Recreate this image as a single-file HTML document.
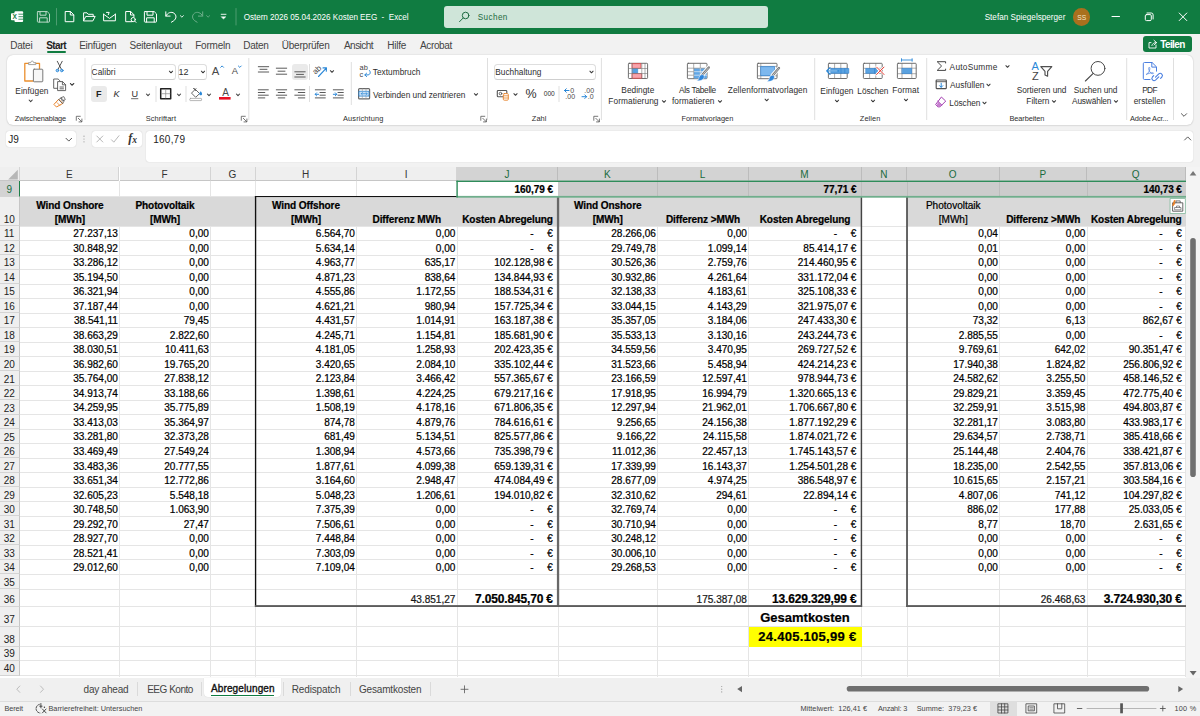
<!DOCTYPE html>
<html lang="de"><head><meta charset="utf-8"><title>Ostern 2026 05.04.2026 Kosten EEG - Excel</title>
<style>
*{box-sizing:border-box;margin:0;padding:0}
html,body{width:1200px;height:716px;overflow:hidden;background:#f2f2f2;font-family:"Liberation Sans",sans-serif;color:#222}
#app{position:relative;width:1200px;height:716px;overflow:hidden;background:#f2f2f2}
.abs{position:absolute}
.lb{position:absolute;white-space:nowrap;line-height:1;font-family:"Liberation Sans",sans-serif}
/* title bar */
#title{position:absolute;left:0;top:0;width:1200px;height:33.7px;background:#107c41}
#search{position:absolute;left:443.7px;top:5.7px;width:324px;height:22.3px;border-radius:3px;background:#cfe5d9}
#avatar{position:absolute;left:1073.2px;top:8.4px;width:17.2px;height:17.2px;border-radius:50%;background:#a9701d}
#share{position:absolute;left:1143px;top:36.2px;width:48.6px;height:16.3px;border-radius:3px;background:#107c41}
#startul{position:absolute;left:47px;top:51px;width:19px;height:1.6px;background:#107c41;border-radius:1px}
/* ribbon */
#ribbon{position:absolute;left:6.5px;top:55px;width:1186.8px;height:70px;background:#fff;border-radius:6px;box-shadow:0 0 1.5px rgba(0,0,0,.22),0 1px 2px rgba(0,0,0,.06)}
.gsep{position:absolute;top:58px;height:62px;width:1px;background:#e3e3e3}
.ssep{position:absolute;width:1px;background:#e3e3e3}
.box{position:absolute;background:#fff;border:1px solid #dedede;border-bottom-color:#cfcfcf;border-radius:3.5px}
.btnsel{position:absolute;background:#eaeaea;border-radius:3px}
/* formula bar */
.fbox{position:absolute;background:#fff;border-radius:3px;box-shadow:0 0 1px rgba(0,0,0,.25)}
/* grid */
#grid{position:absolute;left:0;top:0;width:1200px;height:716px;font-size:10.05px}
#gridbg{position:absolute;left:0;top:167px;width:1185.5px;height:510.5px;background:#fff}
.ch{position:absolute;top:167px;height:14.2px;background:#efefef;border-right:1px solid #d4d4d4;border-bottom:1px solid #c6c6c6;text-align:center;font-size:10px;line-height:15.2px;color:#333}
.ch.sel{background:#d3d3d3;color:#1a6b3e;border-bottom:1px solid #d3d3d3;border-right:1px solid #bcbcbc}
.rh{position:absolute;left:0;width:20.4px;background:#efefef;border-bottom:1px solid #d4d4d4;border-right:1px solid #c6c6c6;text-align:center;font-size:10px;color:#222}
.rh span{position:absolute;left:0;right:1px;bottom:-0.8px;line-height:13px}
.rh.sel{background:#d3d3d3;color:#1a6b3e;border-right:1.5px solid #1e8048}
.vl{position:absolute;top:181.2px;width:1px;height:496.3px;background:#e5e5e5}
.hl{position:absolute;left:20.4px;width:1165.1px;height:1px;background:#e5e5e5}
.vl2{position:absolute;width:1px;background:#bdbdbd}
.fill{position:absolute}
.c{position:absolute;white-space:nowrap;overflow:visible;color:#000;display:flex;align-items:flex-end;line-height:13.2px;padding-bottom:0.1px}
.c{-webkit-text-stroke:0.22px #000}
.c.n{justify-content:flex-end;padding-right:1.6px}
.c.a{justify-content:flex-end;padding-right:5.1px}
.c.a.q{padding-right:3.7px}
.c.h{justify-content:center;text-align:center;line-height:14px;padding-bottom:0px;margin-top:1.2px}
.c.b{font-weight:bold;letter-spacing:-0.1px}
.dash{display:inline-block;margin-right:13.6px}
.c.tot{font-size:13px;line-height:18px;margin-top:0;letter-spacing:0}
.c.tot2{font-size:13px;line-height:18px;padding-bottom:0.2px;letter-spacing:.28px}
.c.big36{font-size:12px;line-height:14.5px;letter-spacing:-.15px}
.c.s36{font-size:10.05px;color:#2a2a2a}
.bk{position:absolute;background:#3a3a3a}
.selbox{position:absolute;border:1.5px solid #3f9467}
/* bottom */
#sheetbar{position:absolute;left:0;top:677.5px;width:1200px;height:23px;background:#f0f0f0}
#acttab{position:absolute;left:204px;top:677.5px;width:77px;height:19.5px;background:#fff;border-radius:0 0 4px 4px;box-shadow:0 0 1px rgba(0,0,0,.2)}
#actul{position:absolute;left:211px;top:694.6px;width:63px;height:1.4px;background:#107c41}
.tsep{position:absolute;top:682px;height:14px;width:1px;background:#dadada}
#status{position:absolute;left:0;top:700.5px;width:1200px;height:15.5px;background:#f2f2f2;border-top:1px solid #dddddd}
#vscroll{position:absolute;left:1185.5px;top:167px;width:14.5px;height:510.5px;background:#f4f4f4}
</style></head><body><div id="app">
<div id="title"><div id="search"></div><div id="avatar"></div></div>
<div id="share"></div><div id="startul"></div>
<div id="ribbon"></div>
<!-- ribbon group separators -->







<svg class="abs" style="left:0;top:0" width="1200" height="130" viewBox="0 0 1200 130"><rect x="84.5" y="58" width="1" height="62" fill="#dfdfdf"/><rect x="248.3" y="58" width="1" height="62" fill="#dfdfdf"/><rect x="487.0" y="58" width="1" height="62" fill="#dfdfdf"/><rect x="600.9" y="58" width="1" height="62" fill="#dfdfdf"/><rect x="814.2" y="58" width="1" height="62" fill="#dfdfdf"/><rect x="926.2" y="58" width="1" height="62" fill="#dfdfdf"/><rect x="1126.2" y="58" width="1" height="62" fill="#dfdfdf"/><rect x="1173.0" y="58" width="1" height="62" fill="#dfdfdf"/><rect x="350.8" y="62" width="1" height="43" fill="#dfdfdf"/><rect x="155.5" y="86" width="1" height="16" fill="#dfdfdf"/><rect x="185.5" y="86" width="1" height="16" fill="#dfdfdf"/><rect x="309.0" y="64" width="1" height="16" fill="#dfdfdf"/><rect x="309.0" y="86" width="1" height="16" fill="#dfdfdf"/><rect x="558.5" y="86" width="1" height="16" fill="#dfdfdf"/></svg>
<div class="box" style="left:90.6px;top:63.6px;width:85px;height:16.5px"></div>
<div class="box" style="left:177.5px;top:63.6px;width:29px;height:16.5px"></div>
<div class="box" style="left:494px;top:63.6px;width:101.6px;height:16.5px"></div>
<div class="btnsel" style="left:90.5px;top:85.8px;width:16.5px;height:16.2px"></div>
<div class="btnsel" style="left:292px;top:63.5px;width:16px;height:16.5px"></div>
<!-- formula bar -->
<div class="fbox" style="left:6px;top:131px;width:70px;height:16px"></div>
<div class="fbox" style="left:92px;top:131px;width:49.5px;height:16px"></div>
<div class="fbox" style="left:146px;top:131px;width:1047px;height:31px"></div>
<div id="gridbg"></div><div class="abs" style="left:0;top:167px;width:20.4px;height:14.2px;background:#efefef;border-right:1px solid #d4d4d4;border-bottom:1px solid #c6c6c6"></div>
<div id="grid">
<div class="ch" style="left:20.4px;width:99.1px">E</div>
<div class="ch" style="left:119.5px;width:91px">F</div>
<div class="ch" style="left:210.5px;width:45px">G</div>
<div class="ch" style="left:255.5px;width:101px">H</div>
<div class="ch" style="left:356.5px;width:100.5px">I</div>
<div class="ch sel" style="left:457px;width:101px">J</div>
<div class="ch sel" style="left:558px;width:99.5px">K</div>
<div class="ch sel" style="left:657.5px;width:91px">L</div>
<div class="ch sel" style="left:748.5px;width:113px">M</div>
<div class="ch sel" style="left:861.5px;width:45.5px">N</div>
<div class="ch sel" style="left:907px;width:92.5px">O</div>
<div class="ch sel" style="left:999.5px;width:87.5px">P</div>
<div class="ch sel" style="left:1087px;width:98.5px">Q</div>
<div class="rh sel" style="top:181.2px;height:15.4px"><span>9</span></div>
<div class="rh" style="top:196.6px;height:29.4px"><span>10</span></div>
<div class="rh" style="top:226px;height:14.52px"><span>11</span></div>
<div class="rh" style="top:240.52px;height:14.52px"><span>12</span></div>
<div class="rh" style="top:255.04px;height:14.52px"><span>13</span></div>
<div class="rh" style="top:269.56px;height:14.52px"><span>14</span></div>
<div class="rh" style="top:284.08px;height:14.52px"><span>15</span></div>
<div class="rh" style="top:298.6px;height:14.52px"><span>16</span></div>
<div class="rh" style="top:313.12px;height:14.52px"><span>17</span></div>
<div class="rh" style="top:327.64px;height:14.52px"><span>18</span></div>
<div class="rh" style="top:342.16px;height:14.52px"><span>19</span></div>
<div class="rh" style="top:356.68px;height:14.52px"><span>20</span></div>
<div class="rh" style="top:371.2px;height:14.52px"><span>21</span></div>
<div class="rh" style="top:385.72px;height:14.52px"><span>22</span></div>
<div class="rh" style="top:400.24px;height:14.52px"><span>23</span></div>
<div class="rh" style="top:414.76px;height:14.52px"><span>24</span></div>
<div class="rh" style="top:429.28px;height:14.52px"><span>25</span></div>
<div class="rh" style="top:443.8px;height:14.52px"><span>26</span></div>
<div class="rh" style="top:458.32px;height:14.52px"><span>27</span></div>
<div class="rh" style="top:472.84px;height:14.52px"><span>28</span></div>
<div class="rh" style="top:487.36px;height:14.52px"><span>29</span></div>
<div class="rh" style="top:501.88px;height:14.52px"><span>30</span></div>
<div class="rh" style="top:516.4px;height:14.52px"><span>31</span></div>
<div class="rh" style="top:530.92px;height:14.52px"><span>32</span></div>
<div class="rh" style="top:545.44px;height:14.52px"><span>33</span></div>
<div class="rh" style="top:559.96px;height:14.52px"><span>34</span></div>
<div class="rh" style="top:574.48px;height:14.6px"><span>35</span></div>
<div class="rh" style="top:589.08px;height:17.5px"><span>36</span></div>
<div class="rh" style="top:606.58px;height:20px"><span>37</span></div>
<div class="rh" style="top:626.58px;height:20px"><span>38</span></div>
<div class="rh" style="top:646.58px;height:14px"><span>39</span></div>
<div class="rh" style="top:660.58px;height:15px"><span>40</span></div>
<div class="vl" style="left:119px"></div>
<div class="vl" style="left:210px"></div>
<div class="vl" style="left:255px"></div>
<div class="vl" style="left:356px"></div>
<div class="vl" style="left:456.5px"></div>
<div class="vl" style="left:557.5px"></div>
<div class="vl" style="left:657px"></div>
<div class="vl" style="left:748px"></div>
<div class="vl" style="left:861px"></div>
<div class="vl" style="left:906.5px"></div>
<div class="vl" style="left:999px"></div>
<div class="vl" style="left:1086.5px"></div>
<div class="vl" style="left:1185px"></div>
<div class="hl" style="top:196.1px"></div>
<div class="hl" style="top:225.5px"></div>
<div class="hl" style="top:240.02px"></div>
<div class="hl" style="top:254.54px"></div>
<div class="hl" style="top:269.06px"></div>
<div class="hl" style="top:283.58px"></div>
<div class="hl" style="top:298.1px"></div>
<div class="hl" style="top:312.62px"></div>
<div class="hl" style="top:327.14px"></div>
<div class="hl" style="top:341.66px"></div>
<div class="hl" style="top:356.18px"></div>
<div class="hl" style="top:370.7px"></div>
<div class="hl" style="top:385.22px"></div>
<div class="hl" style="top:399.74px"></div>
<div class="hl" style="top:414.26px"></div>
<div class="hl" style="top:428.78px"></div>
<div class="hl" style="top:443.3px"></div>
<div class="hl" style="top:457.82px"></div>
<div class="hl" style="top:472.34px"></div>
<div class="hl" style="top:486.86px"></div>
<div class="hl" style="top:501.38px"></div>
<div class="hl" style="top:515.9px"></div>
<div class="hl" style="top:530.42px"></div>
<div class="hl" style="top:544.94px"></div>
<div class="hl" style="top:559.46px"></div>
<div class="hl" style="top:573.98px"></div>
<div class="hl" style="top:588.58px"></div>
<div class="hl" style="top:606.08px"></div>
<div class="hl" style="top:626.08px"></div>
<div class="hl" style="top:646.08px"></div>
<div class="hl" style="top:660.08px"></div>
<div class="hl" style="top:675.08px"></div>
<div class="fill" style="left:20.4px;top:196.6px;width:235.1px;height:29.4px;background:#d9d9d9"></div>
<div class="fill" style="left:255.5px;top:196.6px;width:302.5px;height:29.4px;background:#d9d9d9"></div>
<div class="fill" style="left:558px;top:196.6px;width:303.5px;height:29.4px;background:#d9d9d9"></div>
<div class="fill" style="left:907px;top:196.6px;width:278.5px;height:29.4px;background:#d9d9d9"></div>
<div class="fill" style="left:558px;top:181.2px;width:627.5px;height:15.4px;background:#cccccc"></div>
<div class="fill" style="left:748.5px;top:626.58px;width:113px;height:20px;background:#ffff00"></div>
<div class="fill" style="left:457px;top:181.2px;width:101px;height:15.4px;background:#fff"></div>
<div class="vl2" style="left:657px;top:181.2px;height:15.4px"></div>
<div class="vl2" style="left:748px;top:181.2px;height:15.4px"></div>
<div class="vl2" style="left:861px;top:181.2px;height:15.4px"></div>
<div class="vl2" style="left:906.5px;top:181.2px;height:15.4px"></div>
<div class="vl2" style="left:999px;top:181.2px;height:15.4px"></div>
<div class="vl2" style="left:1086.5px;top:181.2px;height:15.4px"></div>
<div class="c n" style="left:20.4px;top:226px;width:99.1px;height:14.52px;">27.237,13</div>
<div class="c n" style="left:119.5px;top:226px;width:91px;height:14.52px;">0,00</div>
<div class="c n" style="left:255.5px;top:226px;width:101px;height:14.52px;">6.564,70</div>
<div class="c n" style="left:356.5px;top:226px;width:100.5px;height:14.52px;">0,00</div>
<div class="c a" style="left:457px;top:226px;width:101px;height:14.52px;"><span class="dash">-</span>€</div>
<div class="c n" style="left:558px;top:226px;width:99.5px;height:14.52px;">28.266,06</div>
<div class="c n" style="left:657.5px;top:226px;width:91px;height:14.52px;">0,00</div>
<div class="c a" style="left:748.5px;top:226px;width:113px;height:14.52px;"><span class="dash">-</span>€</div>
<div class="c n" style="left:907px;top:226px;width:92.5px;height:14.52px;">0,04</div>
<div class="c n" style="left:999.5px;top:226px;width:87.5px;height:14.52px;">0,00</div>
<div class="c a q" style="left:1087px;top:226px;width:98.5px;height:14.52px;"><span class="dash">-</span>€</div>
<div class="c n" style="left:20.4px;top:240.52px;width:99.1px;height:14.52px;">30.848,92</div>
<div class="c n" style="left:119.5px;top:240.52px;width:91px;height:14.52px;">0,00</div>
<div class="c n" style="left:255.5px;top:240.52px;width:101px;height:14.52px;">5.634,14</div>
<div class="c n" style="left:356.5px;top:240.52px;width:100.5px;height:14.52px;">0,00</div>
<div class="c a" style="left:457px;top:240.52px;width:101px;height:14.52px;"><span class="dash">-</span>€</div>
<div class="c n" style="left:558px;top:240.52px;width:99.5px;height:14.52px;">29.749,78</div>
<div class="c n" style="left:657.5px;top:240.52px;width:91px;height:14.52px;">1.099,14</div>
<div class="c a" style="left:748.5px;top:240.52px;width:113px;height:14.52px;">85.414,17 €</div>
<div class="c n" style="left:907px;top:240.52px;width:92.5px;height:14.52px;">0,01</div>
<div class="c n" style="left:999.5px;top:240.52px;width:87.5px;height:14.52px;">0,00</div>
<div class="c a q" style="left:1087px;top:240.52px;width:98.5px;height:14.52px;"><span class="dash">-</span>€</div>
<div class="c n" style="left:20.4px;top:255.04px;width:99.1px;height:14.52px;">33.286,12</div>
<div class="c n" style="left:119.5px;top:255.04px;width:91px;height:14.52px;">0,00</div>
<div class="c n" style="left:255.5px;top:255.04px;width:101px;height:14.52px;">4.963,77</div>
<div class="c n" style="left:356.5px;top:255.04px;width:100.5px;height:14.52px;">635,17</div>
<div class="c a" style="left:457px;top:255.04px;width:101px;height:14.52px;">102.128,98 €</div>
<div class="c n" style="left:558px;top:255.04px;width:99.5px;height:14.52px;">30.526,36</div>
<div class="c n" style="left:657.5px;top:255.04px;width:91px;height:14.52px;">2.759,76</div>
<div class="c a" style="left:748.5px;top:255.04px;width:113px;height:14.52px;">214.460,95 €</div>
<div class="c n" style="left:907px;top:255.04px;width:92.5px;height:14.52px;">0,00</div>
<div class="c n" style="left:999.5px;top:255.04px;width:87.5px;height:14.52px;">0,00</div>
<div class="c a q" style="left:1087px;top:255.04px;width:98.5px;height:14.52px;"><span class="dash">-</span>€</div>
<div class="c n" style="left:20.4px;top:269.56px;width:99.1px;height:14.52px;">35.194,50</div>
<div class="c n" style="left:119.5px;top:269.56px;width:91px;height:14.52px;">0,00</div>
<div class="c n" style="left:255.5px;top:269.56px;width:101px;height:14.52px;">4.871,23</div>
<div class="c n" style="left:356.5px;top:269.56px;width:100.5px;height:14.52px;">838,64</div>
<div class="c a" style="left:457px;top:269.56px;width:101px;height:14.52px;">134.844,93 €</div>
<div class="c n" style="left:558px;top:269.56px;width:99.5px;height:14.52px;">30.932,86</div>
<div class="c n" style="left:657.5px;top:269.56px;width:91px;height:14.52px;">4.261,64</div>
<div class="c a" style="left:748.5px;top:269.56px;width:113px;height:14.52px;">331.172,04 €</div>
<div class="c n" style="left:907px;top:269.56px;width:92.5px;height:14.52px;">0,00</div>
<div class="c n" style="left:999.5px;top:269.56px;width:87.5px;height:14.52px;">0,00</div>
<div class="c a q" style="left:1087px;top:269.56px;width:98.5px;height:14.52px;"><span class="dash">-</span>€</div>
<div class="c n" style="left:20.4px;top:284.08px;width:99.1px;height:14.52px;">36.321,94</div>
<div class="c n" style="left:119.5px;top:284.08px;width:91px;height:14.52px;">0,00</div>
<div class="c n" style="left:255.5px;top:284.08px;width:101px;height:14.52px;">4.555,86</div>
<div class="c n" style="left:356.5px;top:284.08px;width:100.5px;height:14.52px;">1.172,55</div>
<div class="c a" style="left:457px;top:284.08px;width:101px;height:14.52px;">188.534,31 €</div>
<div class="c n" style="left:558px;top:284.08px;width:99.5px;height:14.52px;">32.138,33</div>
<div class="c n" style="left:657.5px;top:284.08px;width:91px;height:14.52px;">4.183,61</div>
<div class="c a" style="left:748.5px;top:284.08px;width:113px;height:14.52px;">325.108,33 €</div>
<div class="c n" style="left:907px;top:284.08px;width:92.5px;height:14.52px;">0,00</div>
<div class="c n" style="left:999.5px;top:284.08px;width:87.5px;height:14.52px;">0,00</div>
<div class="c a q" style="left:1087px;top:284.08px;width:98.5px;height:14.52px;"><span class="dash">-</span>€</div>
<div class="c n" style="left:20.4px;top:298.6px;width:99.1px;height:14.52px;">37.187,44</div>
<div class="c n" style="left:119.5px;top:298.6px;width:91px;height:14.52px;">0,00</div>
<div class="c n" style="left:255.5px;top:298.6px;width:101px;height:14.52px;">4.621,21</div>
<div class="c n" style="left:356.5px;top:298.6px;width:100.5px;height:14.52px;">980,94</div>
<div class="c a" style="left:457px;top:298.6px;width:101px;height:14.52px;">157.725,34 €</div>
<div class="c n" style="left:558px;top:298.6px;width:99.5px;height:14.52px;">33.044,15</div>
<div class="c n" style="left:657.5px;top:298.6px;width:91px;height:14.52px;">4.143,29</div>
<div class="c a" style="left:748.5px;top:298.6px;width:113px;height:14.52px;">321.975,07 €</div>
<div class="c n" style="left:907px;top:298.6px;width:92.5px;height:14.52px;">0,00</div>
<div class="c n" style="left:999.5px;top:298.6px;width:87.5px;height:14.52px;">0,00</div>
<div class="c a q" style="left:1087px;top:298.6px;width:98.5px;height:14.52px;"><span class="dash">-</span>€</div>
<div class="c n" style="left:20.4px;top:313.12px;width:99.1px;height:14.52px;">38.541,11</div>
<div class="c n" style="left:119.5px;top:313.12px;width:91px;height:14.52px;">79,45</div>
<div class="c n" style="left:255.5px;top:313.12px;width:101px;height:14.52px;">4.431,57</div>
<div class="c n" style="left:356.5px;top:313.12px;width:100.5px;height:14.52px;">1.014,91</div>
<div class="c a" style="left:457px;top:313.12px;width:101px;height:14.52px;">163.187,38 €</div>
<div class="c n" style="left:558px;top:313.12px;width:99.5px;height:14.52px;">35.357,05</div>
<div class="c n" style="left:657.5px;top:313.12px;width:91px;height:14.52px;">3.184,06</div>
<div class="c a" style="left:748.5px;top:313.12px;width:113px;height:14.52px;">247.433,30 €</div>
<div class="c n" style="left:907px;top:313.12px;width:92.5px;height:14.52px;">73,32</div>
<div class="c n" style="left:999.5px;top:313.12px;width:87.5px;height:14.52px;">6,13</div>
<div class="c a q" style="left:1087px;top:313.12px;width:98.5px;height:14.52px;">862,67 €</div>
<div class="c n" style="left:20.4px;top:327.64px;width:99.1px;height:14.52px;">38.663,29</div>
<div class="c n" style="left:119.5px;top:327.64px;width:91px;height:14.52px;">2.822,60</div>
<div class="c n" style="left:255.5px;top:327.64px;width:101px;height:14.52px;">4.245,71</div>
<div class="c n" style="left:356.5px;top:327.64px;width:100.5px;height:14.52px;">1.154,81</div>
<div class="c a" style="left:457px;top:327.64px;width:101px;height:14.52px;">185.681,90 €</div>
<div class="c n" style="left:558px;top:327.64px;width:99.5px;height:14.52px;">35.533,13</div>
<div class="c n" style="left:657.5px;top:327.64px;width:91px;height:14.52px;">3.130,16</div>
<div class="c a" style="left:748.5px;top:327.64px;width:113px;height:14.52px;">243.244,73 €</div>
<div class="c n" style="left:907px;top:327.64px;width:92.5px;height:14.52px;">2.885,55</div>
<div class="c n" style="left:999.5px;top:327.64px;width:87.5px;height:14.52px;">0,00</div>
<div class="c a q" style="left:1087px;top:327.64px;width:98.5px;height:14.52px;"><span class="dash">-</span>€</div>
<div class="c n" style="left:20.4px;top:342.16px;width:99.1px;height:14.52px;">38.030,51</div>
<div class="c n" style="left:119.5px;top:342.16px;width:91px;height:14.52px;">10.411,63</div>
<div class="c n" style="left:255.5px;top:342.16px;width:101px;height:14.52px;">4.181,05</div>
<div class="c n" style="left:356.5px;top:342.16px;width:100.5px;height:14.52px;">1.258,93</div>
<div class="c a" style="left:457px;top:342.16px;width:101px;height:14.52px;">202.423,35 €</div>
<div class="c n" style="left:558px;top:342.16px;width:99.5px;height:14.52px;">34.559,56</div>
<div class="c n" style="left:657.5px;top:342.16px;width:91px;height:14.52px;">3.470,95</div>
<div class="c a" style="left:748.5px;top:342.16px;width:113px;height:14.52px;">269.727,52 €</div>
<div class="c n" style="left:907px;top:342.16px;width:92.5px;height:14.52px;">9.769,61</div>
<div class="c n" style="left:999.5px;top:342.16px;width:87.5px;height:14.52px;">642,02</div>
<div class="c a q" style="left:1087px;top:342.16px;width:98.5px;height:14.52px;">90.351,47 €</div>
<div class="c n" style="left:20.4px;top:356.68px;width:99.1px;height:14.52px;">36.982,60</div>
<div class="c n" style="left:119.5px;top:356.68px;width:91px;height:14.52px;">19.765,20</div>
<div class="c n" style="left:255.5px;top:356.68px;width:101px;height:14.52px;">3.420,65</div>
<div class="c n" style="left:356.5px;top:356.68px;width:100.5px;height:14.52px;">2.084,10</div>
<div class="c a" style="left:457px;top:356.68px;width:101px;height:14.52px;">335.102,44 €</div>
<div class="c n" style="left:558px;top:356.68px;width:99.5px;height:14.52px;">31.523,66</div>
<div class="c n" style="left:657.5px;top:356.68px;width:91px;height:14.52px;">5.458,94</div>
<div class="c a" style="left:748.5px;top:356.68px;width:113px;height:14.52px;">424.214,23 €</div>
<div class="c n" style="left:907px;top:356.68px;width:92.5px;height:14.52px;">17.940,38</div>
<div class="c n" style="left:999.5px;top:356.68px;width:87.5px;height:14.52px;">1.824,82</div>
<div class="c a q" style="left:1087px;top:356.68px;width:98.5px;height:14.52px;">256.806,92 €</div>
<div class="c n" style="left:20.4px;top:371.2px;width:99.1px;height:14.52px;">35.764,00</div>
<div class="c n" style="left:119.5px;top:371.2px;width:91px;height:14.52px;">27.838,12</div>
<div class="c n" style="left:255.5px;top:371.2px;width:101px;height:14.52px;">2.123,84</div>
<div class="c n" style="left:356.5px;top:371.2px;width:100.5px;height:14.52px;">3.466,42</div>
<div class="c a" style="left:457px;top:371.2px;width:101px;height:14.52px;">557.365,67 €</div>
<div class="c n" style="left:558px;top:371.2px;width:99.5px;height:14.52px;">23.166,59</div>
<div class="c n" style="left:657.5px;top:371.2px;width:91px;height:14.52px;">12.597,41</div>
<div class="c a" style="left:748.5px;top:371.2px;width:113px;height:14.52px;">978.944,73 €</div>
<div class="c n" style="left:907px;top:371.2px;width:92.5px;height:14.52px;">24.582,62</div>
<div class="c n" style="left:999.5px;top:371.2px;width:87.5px;height:14.52px;">3.255,50</div>
<div class="c a q" style="left:1087px;top:371.2px;width:98.5px;height:14.52px;">458.146,52 €</div>
<div class="c n" style="left:20.4px;top:385.72px;width:99.1px;height:14.52px;">34.913,74</div>
<div class="c n" style="left:119.5px;top:385.72px;width:91px;height:14.52px;">33.188,66</div>
<div class="c n" style="left:255.5px;top:385.72px;width:101px;height:14.52px;">1.398,61</div>
<div class="c n" style="left:356.5px;top:385.72px;width:100.5px;height:14.52px;">4.224,25</div>
<div class="c a" style="left:457px;top:385.72px;width:101px;height:14.52px;">679.217,16 €</div>
<div class="c n" style="left:558px;top:385.72px;width:99.5px;height:14.52px;">17.918,95</div>
<div class="c n" style="left:657.5px;top:385.72px;width:91px;height:14.52px;">16.994,79</div>
<div class="c a" style="left:748.5px;top:385.72px;width:113px;height:14.52px;">1.320.665,13 €</div>
<div class="c n" style="left:907px;top:385.72px;width:92.5px;height:14.52px;">29.829,21</div>
<div class="c n" style="left:999.5px;top:385.72px;width:87.5px;height:14.52px;">3.359,45</div>
<div class="c a q" style="left:1087px;top:385.72px;width:98.5px;height:14.52px;">472.775,40 €</div>
<div class="c n" style="left:20.4px;top:400.24px;width:99.1px;height:14.52px;">34.259,95</div>
<div class="c n" style="left:119.5px;top:400.24px;width:91px;height:14.52px;">35.775,89</div>
<div class="c n" style="left:255.5px;top:400.24px;width:101px;height:14.52px;">1.508,19</div>
<div class="c n" style="left:356.5px;top:400.24px;width:100.5px;height:14.52px;">4.178,16</div>
<div class="c a" style="left:457px;top:400.24px;width:101px;height:14.52px;">671.806,35 €</div>
<div class="c n" style="left:558px;top:400.24px;width:99.5px;height:14.52px;">12.297,94</div>
<div class="c n" style="left:657.5px;top:400.24px;width:91px;height:14.52px;">21.962,01</div>
<div class="c a" style="left:748.5px;top:400.24px;width:113px;height:14.52px;">1.706.667,80 €</div>
<div class="c n" style="left:907px;top:400.24px;width:92.5px;height:14.52px;">32.259,91</div>
<div class="c n" style="left:999.5px;top:400.24px;width:87.5px;height:14.52px;">3.515,98</div>
<div class="c a q" style="left:1087px;top:400.24px;width:98.5px;height:14.52px;">494.803,87 €</div>
<div class="c n" style="left:20.4px;top:414.76px;width:99.1px;height:14.52px;">33.413,03</div>
<div class="c n" style="left:119.5px;top:414.76px;width:91px;height:14.52px;">35.364,97</div>
<div class="c n" style="left:255.5px;top:414.76px;width:101px;height:14.52px;">874,78</div>
<div class="c n" style="left:356.5px;top:414.76px;width:100.5px;height:14.52px;">4.879,76</div>
<div class="c a" style="left:457px;top:414.76px;width:101px;height:14.52px;">784.616,61 €</div>
<div class="c n" style="left:558px;top:414.76px;width:99.5px;height:14.52px;">9.256,65</div>
<div class="c n" style="left:657.5px;top:414.76px;width:91px;height:14.52px;">24.156,38</div>
<div class="c a" style="left:748.5px;top:414.76px;width:113px;height:14.52px;">1.877.192,29 €</div>
<div class="c n" style="left:907px;top:414.76px;width:92.5px;height:14.52px;">32.281,17</div>
<div class="c n" style="left:999.5px;top:414.76px;width:87.5px;height:14.52px;">3.083,80</div>
<div class="c a q" style="left:1087px;top:414.76px;width:98.5px;height:14.52px;">433.983,17 €</div>
<div class="c n" style="left:20.4px;top:429.28px;width:99.1px;height:14.52px;">33.281,80</div>
<div class="c n" style="left:119.5px;top:429.28px;width:91px;height:14.52px;">32.373,28</div>
<div class="c n" style="left:255.5px;top:429.28px;width:101px;height:14.52px;">681,49</div>
<div class="c n" style="left:356.5px;top:429.28px;width:100.5px;height:14.52px;">5.134,51</div>
<div class="c a" style="left:457px;top:429.28px;width:101px;height:14.52px;">825.577,86 €</div>
<div class="c n" style="left:558px;top:429.28px;width:99.5px;height:14.52px;">9.166,22</div>
<div class="c n" style="left:657.5px;top:429.28px;width:91px;height:14.52px;">24.115,58</div>
<div class="c a" style="left:748.5px;top:429.28px;width:113px;height:14.52px;">1.874.021,72 €</div>
<div class="c n" style="left:907px;top:429.28px;width:92.5px;height:14.52px;">29.634,57</div>
<div class="c n" style="left:999.5px;top:429.28px;width:87.5px;height:14.52px;">2.738,71</div>
<div class="c a q" style="left:1087px;top:429.28px;width:98.5px;height:14.52px;">385.418,66 €</div>
<div class="c n" style="left:20.4px;top:443.8px;width:99.1px;height:14.52px;">33.469,49</div>
<div class="c n" style="left:119.5px;top:443.8px;width:91px;height:14.52px;">27.549,24</div>
<div class="c n" style="left:255.5px;top:443.8px;width:101px;height:14.52px;">1.308,94</div>
<div class="c n" style="left:356.5px;top:443.8px;width:100.5px;height:14.52px;">4.573,66</div>
<div class="c a" style="left:457px;top:443.8px;width:101px;height:14.52px;">735.398,79 €</div>
<div class="c n" style="left:558px;top:443.8px;width:99.5px;height:14.52px;">11.012,36</div>
<div class="c n" style="left:657.5px;top:443.8px;width:91px;height:14.52px;">22.457,13</div>
<div class="c a" style="left:748.5px;top:443.8px;width:113px;height:14.52px;">1.745.143,57 €</div>
<div class="c n" style="left:907px;top:443.8px;width:92.5px;height:14.52px;">25.144,48</div>
<div class="c n" style="left:999.5px;top:443.8px;width:87.5px;height:14.52px;">2.404,76</div>
<div class="c a q" style="left:1087px;top:443.8px;width:98.5px;height:14.52px;">338.421,87 €</div>
<div class="c n" style="left:20.4px;top:458.32px;width:99.1px;height:14.52px;">33.483,36</div>
<div class="c n" style="left:119.5px;top:458.32px;width:91px;height:14.52px;">20.777,55</div>
<div class="c n" style="left:255.5px;top:458.32px;width:101px;height:14.52px;">1.877,61</div>
<div class="c n" style="left:356.5px;top:458.32px;width:100.5px;height:14.52px;">4.099,38</div>
<div class="c a" style="left:457px;top:458.32px;width:101px;height:14.52px;">659.139,31 €</div>
<div class="c n" style="left:558px;top:458.32px;width:99.5px;height:14.52px;">17.339,99</div>
<div class="c n" style="left:657.5px;top:458.32px;width:91px;height:14.52px;">16.143,37</div>
<div class="c a" style="left:748.5px;top:458.32px;width:113px;height:14.52px;">1.254.501,28 €</div>
<div class="c n" style="left:907px;top:458.32px;width:92.5px;height:14.52px;">18.235,00</div>
<div class="c n" style="left:999.5px;top:458.32px;width:87.5px;height:14.52px;">2.542,55</div>
<div class="c a q" style="left:1087px;top:458.32px;width:98.5px;height:14.52px;">357.813,06 €</div>
<div class="c n" style="left:20.4px;top:472.84px;width:99.1px;height:14.52px;">33.651,34</div>
<div class="c n" style="left:119.5px;top:472.84px;width:91px;height:14.52px;">12.772,86</div>
<div class="c n" style="left:255.5px;top:472.84px;width:101px;height:14.52px;">3.164,60</div>
<div class="c n" style="left:356.5px;top:472.84px;width:100.5px;height:14.52px;">2.948,47</div>
<div class="c a" style="left:457px;top:472.84px;width:101px;height:14.52px;">474.084,49 €</div>
<div class="c n" style="left:558px;top:472.84px;width:99.5px;height:14.52px;">28.677,09</div>
<div class="c n" style="left:657.5px;top:472.84px;width:91px;height:14.52px;">4.974,25</div>
<div class="c a" style="left:748.5px;top:472.84px;width:113px;height:14.52px;">386.548,97 €</div>
<div class="c n" style="left:907px;top:472.84px;width:92.5px;height:14.52px;">10.615,65</div>
<div class="c n" style="left:999.5px;top:472.84px;width:87.5px;height:14.52px;">2.157,21</div>
<div class="c a q" style="left:1087px;top:472.84px;width:98.5px;height:14.52px;">303.584,16 €</div>
<div class="c n" style="left:20.4px;top:487.36px;width:99.1px;height:14.52px;">32.605,23</div>
<div class="c n" style="left:119.5px;top:487.36px;width:91px;height:14.52px;">5.548,18</div>
<div class="c n" style="left:255.5px;top:487.36px;width:101px;height:14.52px;">5.048,23</div>
<div class="c n" style="left:356.5px;top:487.36px;width:100.5px;height:14.52px;">1.206,61</div>
<div class="c a" style="left:457px;top:487.36px;width:101px;height:14.52px;">194.010,82 €</div>
<div class="c n" style="left:558px;top:487.36px;width:99.5px;height:14.52px;">32.310,62</div>
<div class="c n" style="left:657.5px;top:487.36px;width:91px;height:14.52px;">294,61</div>
<div class="c a" style="left:748.5px;top:487.36px;width:113px;height:14.52px;">22.894,14 €</div>
<div class="c n" style="left:907px;top:487.36px;width:92.5px;height:14.52px;">4.807,06</div>
<div class="c n" style="left:999.5px;top:487.36px;width:87.5px;height:14.52px;">741,12</div>
<div class="c a q" style="left:1087px;top:487.36px;width:98.5px;height:14.52px;">104.297,82 €</div>
<div class="c n" style="left:20.4px;top:501.88px;width:99.1px;height:14.52px;">30.748,50</div>
<div class="c n" style="left:119.5px;top:501.88px;width:91px;height:14.52px;">1.063,90</div>
<div class="c n" style="left:255.5px;top:501.88px;width:101px;height:14.52px;">7.375,39</div>
<div class="c n" style="left:356.5px;top:501.88px;width:100.5px;height:14.52px;">0,00</div>
<div class="c a" style="left:457px;top:501.88px;width:101px;height:14.52px;"><span class="dash">-</span>€</div>
<div class="c n" style="left:558px;top:501.88px;width:99.5px;height:14.52px;">32.769,74</div>
<div class="c n" style="left:657.5px;top:501.88px;width:91px;height:14.52px;">0,00</div>
<div class="c a" style="left:748.5px;top:501.88px;width:113px;height:14.52px;"><span class="dash">-</span>€</div>
<div class="c n" style="left:907px;top:501.88px;width:92.5px;height:14.52px;">886,02</div>
<div class="c n" style="left:999.5px;top:501.88px;width:87.5px;height:14.52px;">177,88</div>
<div class="c a q" style="left:1087px;top:501.88px;width:98.5px;height:14.52px;">25.033,05 €</div>
<div class="c n" style="left:20.4px;top:516.4px;width:99.1px;height:14.52px;">29.292,70</div>
<div class="c n" style="left:119.5px;top:516.4px;width:91px;height:14.52px;">27,47</div>
<div class="c n" style="left:255.5px;top:516.4px;width:101px;height:14.52px;">7.506,61</div>
<div class="c n" style="left:356.5px;top:516.4px;width:100.5px;height:14.52px;">0,00</div>
<div class="c a" style="left:457px;top:516.4px;width:101px;height:14.52px;"><span class="dash">-</span>€</div>
<div class="c n" style="left:558px;top:516.4px;width:99.5px;height:14.52px;">30.710,94</div>
<div class="c n" style="left:657.5px;top:516.4px;width:91px;height:14.52px;">0,00</div>
<div class="c a" style="left:748.5px;top:516.4px;width:113px;height:14.52px;"><span class="dash">-</span>€</div>
<div class="c n" style="left:907px;top:516.4px;width:92.5px;height:14.52px;">8,77</div>
<div class="c n" style="left:999.5px;top:516.4px;width:87.5px;height:14.52px;">18,70</div>
<div class="c a q" style="left:1087px;top:516.4px;width:98.5px;height:14.52px;">2.631,65 €</div>
<div class="c n" style="left:20.4px;top:530.92px;width:99.1px;height:14.52px;">28.927,70</div>
<div class="c n" style="left:119.5px;top:530.92px;width:91px;height:14.52px;">0,00</div>
<div class="c n" style="left:255.5px;top:530.92px;width:101px;height:14.52px;">7.448,84</div>
<div class="c n" style="left:356.5px;top:530.92px;width:100.5px;height:14.52px;">0,00</div>
<div class="c a" style="left:457px;top:530.92px;width:101px;height:14.52px;"><span class="dash">-</span>€</div>
<div class="c n" style="left:558px;top:530.92px;width:99.5px;height:14.52px;">30.248,12</div>
<div class="c n" style="left:657.5px;top:530.92px;width:91px;height:14.52px;">0,00</div>
<div class="c a" style="left:748.5px;top:530.92px;width:113px;height:14.52px;"><span class="dash">-</span>€</div>
<div class="c n" style="left:907px;top:530.92px;width:92.5px;height:14.52px;">0,00</div>
<div class="c n" style="left:999.5px;top:530.92px;width:87.5px;height:14.52px;">0,00</div>
<div class="c a q" style="left:1087px;top:530.92px;width:98.5px;height:14.52px;"><span class="dash">-</span>€</div>
<div class="c n" style="left:20.4px;top:545.44px;width:99.1px;height:14.52px;">28.521,41</div>
<div class="c n" style="left:119.5px;top:545.44px;width:91px;height:14.52px;">0,00</div>
<div class="c n" style="left:255.5px;top:545.44px;width:101px;height:14.52px;">7.303,09</div>
<div class="c n" style="left:356.5px;top:545.44px;width:100.5px;height:14.52px;">0,00</div>
<div class="c a" style="left:457px;top:545.44px;width:101px;height:14.52px;"><span class="dash">-</span>€</div>
<div class="c n" style="left:558px;top:545.44px;width:99.5px;height:14.52px;">30.006,10</div>
<div class="c n" style="left:657.5px;top:545.44px;width:91px;height:14.52px;">0,00</div>
<div class="c a" style="left:748.5px;top:545.44px;width:113px;height:14.52px;"><span class="dash">-</span>€</div>
<div class="c n" style="left:907px;top:545.44px;width:92.5px;height:14.52px;">0,00</div>
<div class="c n" style="left:999.5px;top:545.44px;width:87.5px;height:14.52px;">0,00</div>
<div class="c a q" style="left:1087px;top:545.44px;width:98.5px;height:14.52px;"><span class="dash">-</span>€</div>
<div class="c n" style="left:20.4px;top:559.96px;width:99.1px;height:14.52px;">29.012,60</div>
<div class="c n" style="left:119.5px;top:559.96px;width:91px;height:14.52px;">0,00</div>
<div class="c n" style="left:255.5px;top:559.96px;width:101px;height:14.52px;">7.109,04</div>
<div class="c n" style="left:356.5px;top:559.96px;width:100.5px;height:14.52px;">0,00</div>
<div class="c a" style="left:457px;top:559.96px;width:101px;height:14.52px;"><span class="dash">-</span>€</div>
<div class="c n" style="left:558px;top:559.96px;width:99.5px;height:14.52px;">29.268,53</div>
<div class="c n" style="left:657.5px;top:559.96px;width:91px;height:14.52px;">0,00</div>
<div class="c a" style="left:748.5px;top:559.96px;width:113px;height:14.52px;"><span class="dash">-</span>€</div>
<div class="c n" style="left:907px;top:559.96px;width:92.5px;height:14.52px;">0,00</div>
<div class="c n" style="left:999.5px;top:559.96px;width:87.5px;height:14.52px;">0,00</div>
<div class="c a q" style="left:1087px;top:559.96px;width:98.5px;height:14.52px;"><span class="dash">-</span>€</div>
<div class="c a b" style="left:457px;top:181.2px;width:101px;height:15.4px;">160,79 €</div>
<div class="c a b" style="left:748.5px;top:181.2px;width:113px;height:15.4px;">77,71 €</div>
<div class="c a b q" style="left:1087px;top:181.2px;width:98.5px;height:15.4px;">140,73 €</div>
<div class="c h b" style="left:20.4px;top:196.6px;width:99.1px;height:29.4px;">Wind Onshore<br>[MWh]</div>
<div class="c h b" style="left:119.5px;top:196.6px;width:91px;height:29.4px;">Photovoltaik<br>[MWh]</div>
<div class="c h b" style="left:255.5px;top:196.6px;width:101px;height:29.4px;">Wind Offshore<br>[MWh]</div>
<div class="c h b" style="left:356.5px;top:196.6px;width:100.5px;height:29.4px;">Differenz MWh</div>
<div class="c h b" style="left:457px;top:196.6px;width:101px;height:29.4px;">Kosten Abregelung</div>
<div class="c h b" style="left:558px;top:196.6px;width:99.5px;height:29.4px;">Wind Onshore<br>[MWh]</div>
<div class="c h b" style="left:657.5px;top:196.6px;width:91px;height:29.4px;">Differenz &gt;MWh</div>
<div class="c h b" style="left:748.5px;top:196.6px;width:113px;height:29.4px;">Kosten Abregelung</div>
<div class="c h" style="left:907px;top:196.6px;width:92.5px;height:29.4px;">Photovoltaik<br>[MWh]</div>
<div class="c h b" style="left:999.5px;top:196.6px;width:87.5px;height:29.4px;">Differenz &gt;MWh</div>
<div class="c h b" style="left:1087px;top:196.6px;width:98.5px;height:29.4px;">Kosten Abregelung</div>
<div class="c n s36" style="left:356.5px;top:589.08px;width:100.5px;height:17.5px;">43.851,27</div>
<div class="c a b big36" style="left:457px;top:589.08px;width:101px;height:17.5px;">7.050.845,70 €</div>
<div class="c n s36" style="left:657.5px;top:589.08px;width:91px;height:17.5px;">175.387,08</div>
<div class="c a b big36" style="left:748.5px;top:589.08px;width:113px;height:17.5px;">13.629.329,99 €</div>
<div class="c n s36" style="left:999.5px;top:589.08px;width:87.5px;height:17.5px;">26.468,63</div>
<div class="c a b big36 q" style="left:1087px;top:589.08px;width:98.5px;height:17.5px;">3.724.930,30 €</div>
<div class="c h b tot" style="left:748.5px;top:606.58px;width:113px;height:20px;">Gesamtkosten</div>
<div class="c a b tot2" style="left:748.5px;top:626.58px;width:113px;height:20px;">24.405.105,99 €</div>
<svg class="abs" style="left:0;top:0" width="1200" height="716" viewBox="0 0 1200 716"><rect x="254.9" y="196" width="1.35" height="411" fill="#111"/><rect x="254.9" y="196" width="202.3" height="1.05" fill="#111"/><rect x="556.9" y="197" width="2.3" height="410" fill="#686868"/><rect x="860.7" y="197" width="1.45" height="410" fill="#444"/><rect x="906.2" y="197" width="1.6" height="410" fill="#444"/><rect x="254.9" y="605.1" width="607.2" height="1.9" fill="#5c5c5c"/><rect x="906.2" y="605.1" width="280" height="1.9" fill="#5c5c5c"/></svg>
<svg class="abs" style="left:0;top:0" width="1200" height="716" viewBox="0 0 1200 716"><rect x="456.4" y="180.6" width="730" height="1.4" fill="#2f8c5a"/><rect x="456.4" y="195.9" width="730" height="1.8" fill="#6fae8c"/><rect x="456.4" y="180.6" width="1.4" height="16.8" fill="#2f8c5a"/></svg>
</div>
<div id="vscroll"></div>
<div id="sheetbar"></div><div id="acttab"></div><div id="actul"></div>
<div class="tsep" style="left:137.4px"></div><div class="tsep" style="left:200.9px"></div><div class="tsep" style="left:283.2px"></div><div class="tsep" style="left:349.9px"></div><div class="tsep" style="left:429.9px"></div>
<div id="status"></div>
<div class="abs" style="left:990px;top:701px;width:27px;height:15px;background:#dedede"></div>
<svg class="abs" style="left:0;top:0" width="1200" height="130" viewBox="0 0 1200 130" fill="none" stroke-linecap="round" stroke-linejoin="round">
<!-- ===== title bar ===== -->
<g stroke="#fff" stroke-width="1">
 <!-- excel logo -->
 <rect x="14.5" y="11.3" width="8.6" height="10.6" rx="1" fill="#fff" stroke="none"/>
 <path d="M18.5 14.2h4.6M18.5 16.7h4.6M18.5 19.2h4.6" stroke="#107c41" stroke-width=".8"/>
 <rect x="11" y="13.2" width="7.4" height="7" rx=".8" fill="#fff" stroke="none"/>
 <text x="14.7" y="19.2" font-family="Liberation Sans,sans-serif" font-size="6.6" font-weight="bold" fill="#107c41" stroke="none" text-anchor="middle">X</text>
 <!-- autosave floppy (dim) -->
 <g opacity=".72"><path d="M38 11.6h9.2l2.3 2.3v7.6a.6.6 0 0 1-.6.6H38a.6.6 0 0 1-.6-.6v-9.3a.6.6 0 0 1 .6-.6z"/><path d="M40 11.8v3.4h6v-3.4M39.6 22v-4.2h7.6V22"/></g>
 <path d="M56.5 8.5v16.5" opacity=".32" stroke-width=".8"/>
 <!-- new -->
 <path d="M65.6 11.5h4.9l3.3 3.3v6.9h-8.2zM70.3 11.6v3.4h3.4"/>
 <!-- open -->
 <path d="M83.6 20.6v-7.8h3.4l1.2 1.5h5v2.2M83.6 20.6l2.2-4.2h9.4l-2.2 4.2z"/>
 <!-- mail -->
 <path d="M103.6 14.2v6.6h11.8v-6.6M103.6 14.2l5.9 4.2 5.9-4.2M106.5 12.4h2.7l-.9 2.3"/>
 <!-- print preview doc -->
 <path d="M132 21.7h-6.300v-10.200h5l3.200 3.200v2.300M130.500 11.600v3.400h3.400"/><circle cx="133.200" cy="19.600" r="2.100"/><path d="M134.800 21.200l1.200 1.200"/>
 <!-- save -->
 <path d="M145 11.600h9.200l2.300 2.300v7.600a.6.6 0 0 1-.6.600h-10.900a.6.6 0 0 1-.6-.600v-9.300a.6.6 0 0 1 .6-.600z"/><path d="M147 11.800v3.400h6v-3.400M146.600 22v-4.200h7.600v4.200"/>
 <!-- undo -->
 <path d="M165.800 11.800v4.300h4.300M165.900 16c1.700-3.500 5.600-4.700 8.200-2.700 2.700 2.100 2.300 5.400-.3 7.400l-2.400 1.500"/>
 <path d="M180.400 15.700l1.500 1.500 1.500-1.500" stroke-width=".9"/>
 <!-- redo (dim) -->
 <g opacity=".38"><path d="M202.700 11.800v4.300h-4.300M202.600 16c-1.700-3.500-5.600-4.700-8.200-2.700-2.700 2.100-2.300 5.400.3 7.400l2.400 1.500"/><path d="M206.600 15.700l1.500 1.500 1.500-1.500" stroke-width=".9"/></g>
 <!-- customize -->
 <path d="M221.200 14.300h4.800" stroke-width=".9"/><path d="M221.300 16.700h4.600l-2.300 2.200z" fill="#fff" stroke-width=".4"/>
 <path d="M236 8.500v16.500" opacity=".32" stroke-width=".8"/>
 <!-- window controls -->
 <path d="M1112 16.500h7.500" stroke-width="1"/>
 <rect x="1145.300" y="14.600" width="6" height="6" rx="1.200"/><path d="M1147 13h4.300a1.800 1.800 0 0 1 1.800 1.800v4.200"/>
 <path d="M1179.200 13l7.600 7.600M1186.800 13l-7.600 7.600" stroke-width="1"/>
 <!-- share icon -->
 <path d="M1156 45v3h-7v-5.400h2M1154 40.300l2.600 2.300-2.600 2.300M1156.400 42.600c-2.600 0-3.900.9-4.500 2.900" stroke-width=".9"/>
</g>
<!-- search glass -->
<g stroke="#1d6b41" stroke-width="1"><circle cx="465.600" cy="15.500" r="3.300"/><path d="M463.300 17.900l-3.800 3.800"/></g>

<!-- ===== clipboard group ===== -->
<g stroke-width="1">
 <path d="M29 63.400h-4.200v17.600h8.300M39.300 63.400h.200v5.400M35 63.400h4.500" stroke="#ea8f2e" stroke-width="1.300"/>
 <path d="M28.600 64.200v-1.500h2.100c0-2.100 3-2.100 3 0h2.100v1.500z" stroke="#8a8a8a" stroke-width=".8" fill="#fff"/>
 <rect x="33.400" y="69.200" width="9.400" height="12.600" rx=".8" stroke="#7a7a7a" fill="#f7f7f7"/>
 <!-- scissors -->
 <path d="M57.300 61.300l4.300 8.300M62.200 61.300l-4.300 8.300" stroke="#444" stroke-width=".9"/>
 <circle cx="57.400" cy="70.500" r="1.300" stroke="#2b88d8" stroke-width=".9" fill="#9ccbf0"/><circle cx="61.800" cy="70.500" r="1.300" stroke="#2b88d8" stroke-width=".9" fill="#9ccbf0"/>
 <!-- copy -->
 <path d="M57.500 88.300h-3.800v-9.300h4.400l2.300 2.300" stroke="#555" stroke-width=".9"/>
 <path d="M58 81.600h4.600l3 3v6h-7.600zM62.400 81.700v3.100h3.100M60 87h3.500M60 88.800h3.500" stroke="#555" stroke-width=".9"/>
 <path d="M70.600 83.600l1.600 1.600 1.600-1.600" stroke="#444" stroke-width=".9"/>
 <!-- format painter -->
 <path d="M61.200 97.600l2.600-1 1.500 3-2.600 1.300z" stroke="#555" stroke-width=".8"/>
 <path d="M59 99.500l3.800 3.900-6.300 3.600-2.300-2.300z" stroke="#e8832a" stroke-width="1" />
 <path d="M57 102.600l2.700 2.700" stroke="#e8832a" stroke-width=".8"/>
 <path d="M58.900 99.400l2.300-1.500 3 3-1.400 2.400z" stroke="#555" stroke-width=".8"/>
</g>
<path d="M76.3 120.3v-4h4M78.3 118.3l3.4 3.4M81.9 119v2.900h-2.900" stroke="#555" stroke-width=".8"/><path d="M241.3 120.3v-4h4M243.3 118.3l3.4 3.4M246.9 119v2.900h-2.900" stroke="#555" stroke-width=".8"/><path d="M480.8 120.3v-4h4M482.8 118.3l3.4 3.4M486.4 119v2.900h-2.900" stroke="#555" stroke-width=".8"/><path d="M593.8 120.3v-4h4M595.8 118.3l3.4 3.4M599.4 119v2.900h-2.900" stroke="#555" stroke-width=".8"/>
<path d="M169.4 71.2l1.6 1.6 1.6 -1.6" stroke="#3a3a3a" stroke-width="1.05"/><path d="M201.4 71.2l1.6 1.6 1.6 -1.6" stroke="#3a3a3a" stroke-width="1.05"/><path d="M589.9 71.2l1.6 1.6 1.6 -1.6" stroke="#3a3a3a" stroke-width="1.05"/><path d="M70.4 83.6l1.6 1.6 1.6 -1.6" stroke="#3a3a3a" stroke-width="1.05"/><path d="M146.4 94l1.6 1.6 1.6 -1.6" stroke="#3a3a3a" stroke-width="1.05"/><path d="M177.4 94l1.6 1.6 1.6 -1.6" stroke="#3a3a3a" stroke-width="1.05"/><path d="M207.4 94l1.6 1.6 1.6 -1.6" stroke="#3a3a3a" stroke-width="1.05"/><path d="M236.4 94l1.6 1.6 1.6 -1.6" stroke="#3a3a3a" stroke-width="1.05"/><path d="M330.4 70.7l1.6 1.6 1.6 -1.6" stroke="#3a3a3a" stroke-width="1.05"/><path d="M474.4 93.7l1.6 1.6 1.6 -1.6" stroke="#3a3a3a" stroke-width="1.05"/><path d="M513.9 93.7l1.6 1.6 1.6 -1.6" stroke="#3a3a3a" stroke-width="1.05"/><path d="M29.1 100l1.6 1.6 1.6 -1.6" stroke="#3a3a3a" stroke-width="1.05"/><path d="M662.4 100.7l1.6 1.6 1.6 -1.6" stroke="#3a3a3a" stroke-width="1.05"/><path d="M718.4 100.7l1.6 1.6 1.6 -1.6" stroke="#3a3a3a" stroke-width="1.05"/><path d="M765.1 99.2l1.6 1.6 1.6 -1.6" stroke="#3a3a3a" stroke-width="1.05"/><path d="M835.4 100.2l1.6 1.6 1.6 -1.6" stroke="#3a3a3a" stroke-width="1.05"/><path d="M871.4 100.2l1.6 1.6 1.6 -1.6" stroke="#3a3a3a" stroke-width="1.05"/><path d="M904.4 99.2l1.6 1.6 1.6 -1.6" stroke="#3a3a3a" stroke-width="1.05"/><path d="M1005.9 65.7l1.6 1.6 1.6 -1.6" stroke="#3a3a3a" stroke-width="1.05"/><path d="M986.9 84.2l1.6 1.6 1.6 -1.6" stroke="#3a3a3a" stroke-width="1.05"/><path d="M982.9 102.2l1.6 1.6 1.6 -1.6" stroke="#3a3a3a" stroke-width="1.05"/><path d="M1052.4 100.7l1.6 1.6 1.6 -1.6" stroke="#3a3a3a" stroke-width="1.05"/><path d="M1114.4 100.7l1.6 1.6 1.6 -1.6" stroke="#3a3a3a" stroke-width="1.05"/><path d="M1181.4 113.7l2.6 2.6 2.6 -2.6" stroke="#444" stroke-width="0.9"/>
<!-- ===== font group ===== -->
<path d="M220.700 67.300l1.400-1.400 1.400 1.400" stroke="#2b88d8" stroke-width="1"/>
<path d="M238.400 66l1.400 1.400 1.400-1.400" stroke="#2b88d8" stroke-width="1"/>
<path d="M131.500 98.700h6.400" stroke="#444" stroke-width=".8"/>
<!-- borders -->
<rect x="160.700" y="88.700" width="10" height="10" stroke="#222" stroke-width="1.500"/><path d="M165.700 89.500v8.400M161.500 93.700h8.400" stroke="#8a8a8a" stroke-width=".7"/>
<!-- fill bucket -->
<path d="M194.600 88.600l5 5-3.900 3.700-4.200-4.200 4.500-4.500M193.400 88.300l2.400 2.400" stroke="#555" stroke-width=".9"/>
<path d="M200.700 91.200c.9 1.200 1.400 2 1.400 2.700 0 1.700-2.800 1.700-2.800 0 0-.7.500-1.500 1.400-2.700z" fill="#2b88d8" stroke="none"/>
<rect x="189.800" y="98.400" width="11.800" height="2.200" rx=".6" stroke="#9a9a9a" stroke-width=".7" fill="#fff"/>
<rect x="219" y="97" width="11.600" height="2.600" fill="#e81123"/>
<!-- ===== alignment ===== -->
<g stroke="#5a5a5a" stroke-width="1">
 <path d="M258.300 66.700h10.400M260 69.300h7M258.300 72h10.400"/>
 <path d="M276.300 68.200h10.400M278 71.200h7M276.300 74.200h10.400" />
 <path d="M294.800 71.800h10.400M296.500 74.400h7M294.800 77h10.400"/>
 <path d="M258.300 89.800h10M258.300 92.500h6.500M258.300 95.200h10M258.300 97.900h6.500"/>
 <path d="M276.300 89.800h10.400M278.200 92.500h6.600M276.300 95.200h10.400M278.200 97.900h6.600"/>
 <path d="M294.800 89.800h10M298.300 92.500h6.500M294.800 95.200h10M298.300 97.900h6.500"/>
 <path d="M315.300 89.800h10M320 92.500h5.300M320 95.200h5.300M315.300 97.900h10"/>
 <path d="M333.300 89.800h10M338 92.500h5.300M338 95.200h5.300M333.300 97.900h10"/>
</g>
<g stroke="#2b88d8" stroke-width="1"><path d="M318.600 94.300h-3.300M316.600 92.800l-1.500 1.500 1.500 1.500"/><path d="M333.300 94.300h3.300M335.300 92.800l1.500 1.500-1.500 1.500"/></g>
<!-- orientation -->
<g><text x="314.300" y="72.300" font-family="Liberation Sans,sans-serif" font-size="8" fill="#444" transform="rotate(-45 318 72)">ab</text>
<path d="M318.500 76.500l7.800-8.300M323 67.900l3.500-.1-.2 3.500" stroke="#2b88d8" stroke-width="1.100"/></g>
<!-- wrap text -->
<text x="359.600" y="70.300" font-family="Liberation Sans,sans-serif" font-size="7.400" fill="#444">ab</text>
<text x="359.600" y="76.900" font-family="Liberation Sans,sans-serif" font-size="7.400" fill="#444">c</text>
<path d="M369.300 70.300c1.600 1.300 1.300 4.300-1.300 4.600h-3M366.600 73.200l-1.800 1.700 1.800 1.700" stroke="#2b88d8" stroke-width="1"/>
<!-- merge & center -->
<rect x="358.600" y="88.600" width="11" height="10.300" rx="1" stroke="#686868" stroke-width="1.200"/>
<rect x="359.300" y="91.300" width="9.700" height="4.800" fill="#cfe3f6" stroke="#2b88d8" stroke-width=".8"/>
<path d="M361.200 93.700h6M362.500 92.500l-1.300 1.200 1.300 1.200M365.900 92.500l1.300 1.200-1.300 1.200" stroke="#2b88d8" stroke-width=".7"/>
<path d="M362.300 88.800v2.300M366 88.800v2.300M362.300 96.300v2.500M366 96.300v2.500" stroke="#999" stroke-width=".6"/>
<!-- ===== number group ===== -->
<rect x="497.300" y="90.500" width="9.500" height="6.300" rx=".8" stroke="#555" stroke-width="1.100"/>
<circle cx="500.500" cy="93.600" r="1.300" stroke="#555" stroke-width=".9"/>
<rect x="503.300" y="93.600" width="5" height="6.600" rx="1" fill="#fff" stroke="#e8832a" stroke-width=".9"/><path d="M503.500 95.800h4.600M503.500 98h4.600" stroke="#e8832a" stroke-width=".8"/>
<g font-family="Liberation Sans,sans-serif" font-size="7" fill="#4a4a4a">
 <text x="570.300" y="93.200">0</text><text x="565.300" y="99.300">.00</text>
 <text x="584.300" y="93.200">.00</text><text x="587.800" y="99.300">.0</text>
</g>
<g stroke="#2b88d8" stroke-width="1"><path d="M569 90.500h-4.500M566.300 88.700l-1.800 1.800 1.800 1.800"/><path d="M582 96.700h4.600M584.800 94.900l1.800 1.800-1.800 1.800"/></g>
<!-- ===== conditional formatting ===== -->
<g>
 <rect x="628.400" y="63.300" width="19.200" height="15.200" rx=".8" fill="#fff" stroke="#5f5f5f" stroke-width=".9"/>
 <rect x="632.300" y="63.600" width="8.600" height="4.700" fill="#f8a3ab" stroke="#e03a3a" stroke-width=".7"/>
 <rect x="632.300" y="68.700" width="5.400" height="4.600" fill="#5aa2e0" stroke="#2b7fd0" stroke-width=".5"/>
 <rect x="632.300" y="73.600" width="9.400" height="4.700" fill="#f8a3ab" stroke="#e03a3a" stroke-width=".7"/>
 <path d="M632.300 63.500v15M641.800 63.500v15M645 63.500v15M628.500 68.500h19M628.500 73.500h19" stroke="#777" stroke-width=".6"/>
</g>
<!-- ===== format as table ===== -->
<g>
 <rect x="687.400" y="63.300" width="19.600" height="15.400" rx=".8" fill="#fff" stroke="#5f5f5f" stroke-width=".9"/>
 <rect x="694" y="68.300" width="12.800" height="10.200" fill="#62a7e6"/>
 <path d="M693.700 63.500v15M700.300 63.500v15M687.500 68.200h19.400M687.500 71.700h6.400M687.500 75.200h6.400" stroke="#777" stroke-width=".6"/>
 <path d="M700.300 68.400v10M694 71.700h12.800M694 75.200h12.800" stroke="#fff" stroke-width=".6"/>
<g transform="translate(0 0)"><path d="M708.800 67.400l-6.400 7.400" stroke="#fff" stroke-width="4.200"/><path d="M708.800 67.400l-6.400 7.400" stroke="#747474" stroke-width="2.300"/><path d="M708.600 67.800l-5.800 6.700" stroke="#e8e8e8" stroke-width=".7"/><path d="M704.200 75.700c.6 2.900-2.200 5.600-7.600 5.100 1.900-.9 2.200-2.100 2.500-3.500.4-1.900 2.300-2.900 3.600-2.700z" fill="#2f86dc" stroke="#fff" stroke-width=".5"/></g>
</g>
<!-- ===== cell styles ===== -->
<g>
 <rect x="757.400" y="63.300" width="19.600" height="15.400" rx=".8" fill="#fff" stroke="#5f5f5f" stroke-width=".9"/>
 <path d="M760.800 63.500v15M757.500 66.400h19.400M757.500 75.800h19.400" stroke="#777" stroke-width=".6"/>
 <rect x="761" y="66.600" width="13.600" height="9" fill="#7db8ee" stroke="#2b7fd0" stroke-width=".7"/>
<g transform="translate(70.2 0.6)"><path d="M708.800 67.400l-6.400 7.400" stroke="#fff" stroke-width="4.200"/><path d="M708.800 67.400l-6.400 7.400" stroke="#747474" stroke-width="2.300"/><path d="M708.600 67.800l-5.800 6.700" stroke="#e8e8e8" stroke-width=".7"/><path d="M704.200 75.700c.6 2.900-2.200 5.600-7.600 5.100 1.900-.9 2.200-2.100 2.500-3.500.4-1.900 2.300-2.900 3.600-2.700z" fill="#2f86dc" stroke="#fff" stroke-width=".5"/></g>
</g>
<!-- ===== insert cells ===== -->
<g>
 <rect x="828.400" y="63.300" width="18.800" height="15.200" rx=".8" fill="#fff" stroke="#5f5f5f" stroke-width=".9"/>
 <path d="M834.600 63.500v15M840.800 63.500v15M828.500 68.300h18.600M828.500 73.500h18.600" stroke="#777" stroke-width=".6"/>
 <rect x="831" y="68.500" width="17.800" height="4.800" fill="#5aa2e0" stroke="#2b7fd0" stroke-width=".6"/>
 <path d="M841 68.600v4.600M844.800 68.600v4.600" stroke="#2b7fd0" stroke-width=".6"/>
 <path d="M838.500 70.900h-11M830 67.600l-3.300 3.300 3.300 3.300" stroke="#2b88d8" stroke-width="1.300"/>
 <path d="M837 70.900h-8.500" stroke="#fff" stroke-width=".5"/>
</g>
<!-- ===== delete cells ===== -->
<g>
 <rect x="863.400" y="63.300" width="18.800" height="15.200" rx=".8" fill="#fff" stroke="#5f5f5f" stroke-width=".9"/>
 <path d="M869.600 63.500v15M875.800 63.500v15M863.500 68.300h18.600M863.500 73.500h18.600" stroke="#777" stroke-width=".6"/>
 <rect x="866" y="68.500" width="9" height="4.800" fill="#5aa2e0" stroke="#2b7fd0" stroke-width=".6"/>
 <path d="M875 68.300l3 2.600-3 2.600z" fill="#5aa2e0" stroke="#2b7fd0" stroke-width=".5"/>
 <path d="M876.300 66.800l8 8M884.300 66.800l-8 8" stroke="#fff" stroke-width="2.200"/>
 <path d="M876.600 67.100l7.400 7.400M884 67.100l-7.400 7.400" stroke="#e8392f" stroke-width="1"/>
</g>
<!-- ===== format cells ===== -->
<g>
 <rect x="897.400" y="63.300" width="18.800" height="15.200" rx=".8" fill="#fff" stroke="#5f5f5f" stroke-width=".9"/>
 <path d="M902 63.500v15M911.800 63.500v15M897.500 68.200h18.600M897.500 73.700h18.600" stroke="#777" stroke-width=".6"/>
 <rect x="902.200" y="68.400" width="9.400" height="5.100" fill="#5aa2e0" stroke="#2b7fd0" stroke-width=".6"/>
 <path d="M901.500 60h10.600M901.500 58.700v2.600M912.100 58.700v2.600" stroke="#2b88d8" stroke-width=".9"/>
</g>
<!-- ===== editing ===== -->
<path d="M945.600 63v-1.300h-8.400l4.400 4.300-4.400 4.400h8.400v-1.300" stroke="#3c3c3c" stroke-width=".95"/>
<rect x="936.200" y="80" width="10.100" height="8.600" rx=".5" stroke="#505050" stroke-width="1.150"/><path d="M936.200 81.700h10.100" stroke="#505050" stroke-width=".9"/>
<path d="M941.200 83.200v4M939.600 85.700l1.600 1.600 1.600-1.600" stroke="#2b88d8" stroke-width="1"/>
<path d="M941.700 97.300l4 3.800-5.600 5.700-2.200.1-2-2.100z M937.900 101.200l4 4" stroke="#a23bb0" stroke-width="1"/>
<path d="M938.400 101.700l3.300 3.300-1.500 1.600-2.200.1-1.500-1.500z" fill="#c77fd0" stroke="none"/>
<!-- sort & filter -->
<text x="1031.500" y="70.200" font-family="Liberation Sans,sans-serif" font-size="11" fill="#2b88d8">A</text>
<text x="1031.900" y="80.200" font-family="Liberation Sans,sans-serif" font-size="11" fill="#444">Z</text>
<path d="M1040.800 66.600h11l-4.200 4.800v4.800l-2.600-1.300v-3.500z" stroke="#505050" stroke-width="1.150"/>
<!-- find & select -->
<circle cx="1098" cy="68.400" r="6.900" stroke="#4a4a4a" stroke-width="1"/><path d="M1093.200 73.400l-7.800 7.600" stroke="#4a4a4a" stroke-width="1.100"/>
<!-- pdf -->
<path d="M1150 79.500h-5.500a1.200 1.200 0 0 1-1.200-1.200v-14.600a1.200 1.200 0 0 1 1.200-1.200h7.600l4.400 4.400v4.300M1151.800 62.700v4.400h4.500" stroke="#4a7fe0" stroke-width="1"/>
<path d="M1146.500 74.300c2.500-1.300 4-5.400 3.100-6.800-.9-1 -1.700 1.300.2 4.300 1.400 2.100 3.300 2.300 3.700 1.500.3-.9-2.500-.8-7 1z" stroke="#4a7fe0" stroke-width=".7"/>
<path d="M1155.500 77.200l3.300-3.300a2.200 2.200 0 0 1 3.100 3.100l-1.300 1.300M1158.800 76.800l-3.300 3.300a2.200 2.200 0 0 1-3.100-3.100l1.300-1.300" stroke="#4a7fe0" stroke-width="1.100"/>
</svg>
<svg class="abs" style="left:0;top:125px" width="1200" height="591" viewBox="0 125 1200 591" fill="none" stroke-linecap="round" stroke-linejoin="round">
<!-- formula bar -->
<path d="M66 138.300l2.800 2.800 2.800-2.800" stroke="#444" stroke-width=".9"/>
<circle cx="84" cy="136.200" r=".6" fill="#999"/><circle cx="84" cy="139" r=".6" fill="#999"/><circle cx="84" cy="141.800" r=".6" fill="#999"/>
<path d="M96.800 136l6 6M102.800 136l-6 6" stroke="#b0b0b0" stroke-width=".9"/>
<path d="M111.500 139.800l2.300 2.400 5.200-6.500" stroke="#b0b0b0" stroke-width=".9"/>
<text x="128.300" y="142.300" font-family="Liberation Serif,serif" font-style="italic" font-size="12" font-weight="bold" fill="#333">f</text>
<text x="132.300" y="143" font-family="Liberation Serif,serif" font-style="italic" font-size="9.500" font-weight="bold" fill="#333">x</text>
<path d="M1184.600 140l3.100-3.100 3.100 3.100" stroke="#444" stroke-width=".9"/>
<!-- select all corner -->
<path d="M17.800 169.800v9.600h-9.600z" fill="#b7b7b7"/>
<!-- vertical scrollbar -->
<path d="M1189.700 175.600l3.350-4.500 3.350 4.500z" fill="#777"/>
<path d="M1189.700 671.100l3.450 4.500 3.450-4.500z" fill="#666"/>
<rect x="1190.200" y="238" width="5.600" height="239" rx="2.800" fill="#6f6f6f"/>
<!-- paste options -->
<rect x="1170.400" y="198.500" width="15" height="15" fill="#fff" stroke="#8fc0a6" stroke-width=".9"/>
<rect x="1173" y="202.800" width="9.800" height="8.400" stroke="#555" stroke-width=".9" fill="#fff"/>
<path d="M1176 202.600v-1.700h4.200v1.700" stroke="#555" stroke-width=".8"/>
<path d="M1175 207.500h6v2.300h-6zM1176.500 207.300v-1.300h3v1.300" stroke="#666" stroke-width=".7"/>
<path d="M1172.200 205.500l1.800-5.600 1.900.6-1.300 2.500 1 .3-2.300 3z" fill="#e8832a"/>
<!-- sheet nav -->
<path d="M19.800 686l-3 3.200 3 3.200" stroke="#b5b5b5" stroke-width=".9"/>
<path d="M40.500 686l3 3.200-3 3.200" stroke="#b5b5b5" stroke-width=".9"/>
<path d="M461 689.300h7M464.500 685.800v7" stroke="#555" stroke-width=".8"/>
<circle cx="721.700" cy="686.500" r=".6" fill="#999"/><circle cx="721.700" cy="689.200" r=".6" fill="#999"/><circle cx="721.700" cy="691.900" r=".6" fill="#999"/>
<path d="M742 685.900l-4.800 3.150 4.800 3.150z" fill="#666"/>
<path d="M1178.300 685.900l4.800 3.150-4.800 3.150z" fill="#666"/>
<rect x="846.700" y="686" width="302.500" height="5.600" rx="2.800" fill="#6f6f6f"/>
<!-- status bar icons -->
<g stroke="#3a3a3a" stroke-width=".9">
 <path d="M39.300 704.400a4.400 4.400 0 0 0 .6 8.600" stroke-dasharray="1.700 1.200"/>
 <circle cx="40.900" cy="704.100" r=".75" fill="#3a3a3a" stroke="none"/>
 <path d="M40.900 705.300v2.500M39.700 706.200h2.400"/>
 <circle cx="44.400" cy="707.200" r=".7" fill="#3a3a3a" stroke="none"/>
 <path d="M42.400 709l3.700 3.900M46.100 709l-3.700 3.900"/>
</g>
<!-- view buttons -->
<g stroke="#444" stroke-width=".8">
 <rect x="998.300" y="703.800" width="9.600" height="9.200"/><path d="M1001.500 703.800v9.200M1004.700 703.800v9.200M998.300 706.900h9.600M998.300 710h9.600"/>
 <rect x="1026.300" y="703.800" width="10.400" height="9.200"/><rect x="1028.600" y="706" width="5.800" height="4.800"/><path d="M1029.800 707.700h3.400M1029.800 709.200h3.400" stroke-width=".6"/>
 <rect x="1054.300" y="703.800" width="10.400" height="9.200"/><path d="M1057.500 703.800v5h4.300v-5" />
 <path d="M1077.300 708.500h4.600" />
 <path d="M1160.300 708.500h5M1162.800 706v5"/>
</g>
<path d="M1087 708.500h69" stroke="#a6a6a6" stroke-width=".8"/>
<rect x="1120.200" y="703.300" width="2.700" height="10" fill="#555"/>
</svg>

<span class="lb" style="left:243.67px;top:14.44px;font-size:8.15px;color:#fff;letter-spacing:-0.033px">Ostern 2026 05.04.2026 Kosten EEG  -  Excel</span>
<span class="lb" style="left:477.67px;top:14.44px;font-size:8.15px;color:#1d6b41;letter-spacing:0.428px">Suchen</span>
<span class="lb" style="left:984.67px;top:14.44px;font-size:8.15px;color:#fff;letter-spacing:0.014px">Stefan Spiegelsperger</span>
<span class="lb" style="left:1077.23px;top:14.71px;font-size:6.76px;color:#f6e6cc">SS</span>
<span class="lb" style="left:10.20px;top:40.53px;font-size:10.00px;color:#444;letter-spacing:-0.231px">Datei</span>
<span class="lb" style="left:79.20px;top:40.53px;font-size:10.00px;color:#444;letter-spacing:-0.302px">Einfügen</span>
<span class="lb" style="left:129.60px;top:40.53px;font-size:10.00px;color:#444;letter-spacing:-0.242px">Seitenlayout</span>
<span class="lb" style="left:195.20px;top:40.53px;font-size:10.00px;color:#444;letter-spacing:-0.219px">Formeln</span>
<span class="lb" style="left:243.20px;top:40.53px;font-size:10.00px;color:#444;letter-spacing:-0.256px">Daten</span>
<span class="lb" style="left:281.80px;top:40.53px;font-size:10.00px;color:#444;letter-spacing:-0.230px">Überprüfen</span>
<span class="lb" style="left:344.00px;top:40.53px;font-size:10.00px;color:#444;letter-spacing:-0.552px">Ansicht</span>
<span class="lb" style="left:387.20px;top:40.53px;font-size:10.00px;color:#444;letter-spacing:-0.211px">Hilfe</span>
<span class="lb" style="left:420.00px;top:40.53px;font-size:10.00px;color:#444;letter-spacing:-0.364px">Acrobat</span>
<span class="lb" style="left:46.22px;top:40.53px;font-size:10.00px;color:#222;letter-spacing:-0.600px;font-weight:bold">Start</span>
<span class="lb" style="left:1160.18px;top:40.03px;font-size:10.00px;color:#fff;letter-spacing:-0.600px;font-weight:bold">Teilen</span>
<span class="lb" style="left:15.34px;top:87.06px;font-size:8.30px;color:#2e2e2e;letter-spacing:0.052px">Einfügen</span>
<span class="lb" style="left:14.78px;top:114.80px;font-size:7.40px;color:#2e2e2e;letter-spacing:-0.153px">Zwischenablage</span>
<span class="lb" style="left:91.58px;top:68.36px;font-size:8.30px;color:#2e2e2e;letter-spacing:0.068px">Calibri</span>
<span class="lb" style="left:178.39px;top:68.02px;font-size:9.00px;color:#2e2e2e">12</span>
<span class="lb" style="left:95.89px;top:89.77px;font-size:9.10px;color:#222;font-weight:bold">F</span>
<span class="lb" style="left:113.38px;top:89.77px;font-size:9.10px;color:#2e2e2e;font-style:italic">K</span>
<span class="lb" style="left:131.47px;top:89.77px;font-size:9.10px;color:#2e2e2e">U</span>
<span class="lb" style="left:145.70px;top:114.80px;font-size:7.40px;color:#2e2e2e;letter-spacing:0.075px">Schriftart</span>
<span class="lb" style="left:211.66px;top:65.60px;font-size:11.30px;color:#4a4a4a">A</span>
<span class="lb" style="left:231.63px;top:67.38px;font-size:9.30px;color:#4a4a4a">A</span>
<span class="lb" style="left:222.35px;top:88.24px;font-size:10.00px;color:#4a4a4a">A</span>
<span class="lb" style="left:372.83px;top:68.36px;font-size:8.30px;color:#2e2e2e;letter-spacing:0.012px">Textumbruch</span>
<span class="lb" style="left:373.00px;top:90.86px;font-size:8.30px;color:#2e2e2e;letter-spacing:-0.012px">Verbinden und zentrieren</span>
<span class="lb" style="left:343.00px;top:114.80px;font-size:7.40px;color:#2e2e2e;letter-spacing:0.134px">Ausrichtung</span>
<span class="lb" style="left:495.34px;top:68.36px;font-size:8.30px;color:#2e2e2e">Buchhaltung</span>
<span class="lb" style="left:525.44px;top:88.32px;font-size:12.50px;color:#2e2e2e">%</span>
<span class="lb" style="left:543.76px;top:91.19px;font-size:6.60px;color:#2e2e2e">000</span>
<span class="lb" style="left:531.78px;top:114.80px;font-size:7.40px;color:#2e2e2e;letter-spacing:0.096px">Zahl</span>
<span class="lb" style="left:621.34px;top:86.36px;font-size:8.30px;color:#2e2e2e;letter-spacing:0.028px">Bedingte</span>
<span class="lb" style="left:608.34px;top:97.36px;font-size:8.30px;color:#2e2e2e;letter-spacing:0.070px">Formatierung</span>
<span class="lb" style="left:679.00px;top:86.36px;font-size:8.30px;color:#2e2e2e;letter-spacing:-0.284px">Als Tabelle</span>
<span class="lb" style="left:671.92px;top:97.36px;font-size:8.30px;color:#2e2e2e;letter-spacing:0.057px">formatieren</span>
<span class="lb" style="left:727.75px;top:86.36px;font-size:8.30px;color:#2e2e2e;letter-spacing:0.092px">Zellenformatvorlagen</span>
<span class="lb" style="left:681.41px;top:114.80px;font-size:7.40px;color:#2e2e2e;letter-spacing:0.014px">Formatvorlagen</span>
<span class="lb" style="left:820.34px;top:86.86px;font-size:8.30px;color:#2e2e2e;letter-spacing:0.052px">Einfügen</span>
<span class="lb" style="left:857.34px;top:86.86px;font-size:8.30px;color:#2e2e2e;letter-spacing:-0.042px">Löschen</span>
<span class="lb" style="left:892.34px;top:86.36px;font-size:8.30px;color:#2e2e2e;letter-spacing:0.072px">Format</span>
<span class="lb" style="left:859.78px;top:114.80px;font-size:7.40px;color:#2e2e2e;letter-spacing:0.097px">Zellen</span>
<span class="lb" style="left:949.60px;top:62.86px;font-size:8.30px;color:#2e2e2e;letter-spacing:0.254px">AutoSumme</span>
<span class="lb" style="left:950.00px;top:81.06px;font-size:8.30px;color:#2e2e2e;letter-spacing:0.040px">Ausfüllen</span>
<span class="lb" style="left:949.34px;top:98.96px;font-size:8.30px;color:#2e2e2e;letter-spacing:-0.042px">Löschen</span>
<span class="lb" style="left:1016.67px;top:85.86px;font-size:8.30px;color:#2e2e2e">Sortieren und</span>
<span class="lb" style="left:1026.34px;top:97.36px;font-size:8.30px;color:#2e2e2e;letter-spacing:0.012px">Filtern</span>
<span class="lb" style="left:1073.67px;top:85.86px;font-size:8.30px;color:#2e2e2e;letter-spacing:-0.056px">Suchen und</span>
<span class="lb" style="left:1072.00px;top:97.36px;font-size:8.30px;color:#2e2e2e;letter-spacing:-0.142px">Auswählen</span>
<span class="lb" style="left:1142.14px;top:85.86px;font-size:8.30px;color:#2e2e2e;letter-spacing:-0.540px">PDF</span>
<span class="lb" style="left:1133.67px;top:97.36px;font-size:8.30px;color:#2e2e2e;letter-spacing:0.053px">erstellen</span>
<span class="lb" style="left:1009.41px;top:114.80px;font-size:7.40px;color:#2e2e2e;letter-spacing:-0.087px">Bearbeiten</span>
<span class="lb" style="left:1130.00px;top:114.80px;font-size:7.40px;color:#2e2e2e;letter-spacing:-0.151px">Adobe Acr...</span>
<span class="lb" style="left:8.28px;top:135.23px;font-size:10.00px;color:#222">J9</span>
<span class="lb" style="left:153.30px;top:135.03px;font-size:10.00px;color:#222;letter-spacing:0.215px">160,79</span>
<span class="lb" style="left:83.60px;top:685.03px;font-size:10.00px;color:#444;letter-spacing:-0.218px">day ahead</span>
<span class="lb" style="left:147.20px;top:685.03px;font-size:10.00px;color:#444;letter-spacing:-0.483px">EEG Konto</span>
<span class="lb" style="left:211.00px;top:684.03px;font-size:10.00px;color:#111;letter-spacing:0.117px;-webkit-text-stroke:0.35px #111">Abregelungen</span>
<span class="lb" style="left:291.70px;top:685.03px;font-size:10.00px;color:#444;letter-spacing:-0.130px">Redispatch</span>
<span class="lb" style="left:359.00px;top:685.03px;font-size:10.00px;color:#444;letter-spacing:-0.174px">Gesamtkosten</span>
<span class="lb" style="left:4.42px;top:705.35px;font-size:7.30px;color:#444;letter-spacing:-0.100px">Bereit</span>
<span class="lb" style="left:48.42px;top:705.35px;font-size:7.30px;color:#444;letter-spacing:0.024px">Barrierefreiheit: Untersuchen</span>
<span class="lb" style="left:800.42px;top:705.35px;font-size:7.30px;color:#444;letter-spacing:0.045px">Mittelwert:  126,41 €</span>
<span class="lb" style="left:878.00px;top:705.35px;font-size:7.30px;color:#444;letter-spacing:-0.147px">Anzahl: 3</span>
<span class="lb" style="left:916.71px;top:705.35px;font-size:7.30px;color:#444;letter-spacing:0.046px">Summe:  379,23 €</span>
<span class="lb" style="left:1174.49px;top:705.35px;font-size:7.30px;color:#444;letter-spacing:0.256px">100 %</span>
</div></body></html>
